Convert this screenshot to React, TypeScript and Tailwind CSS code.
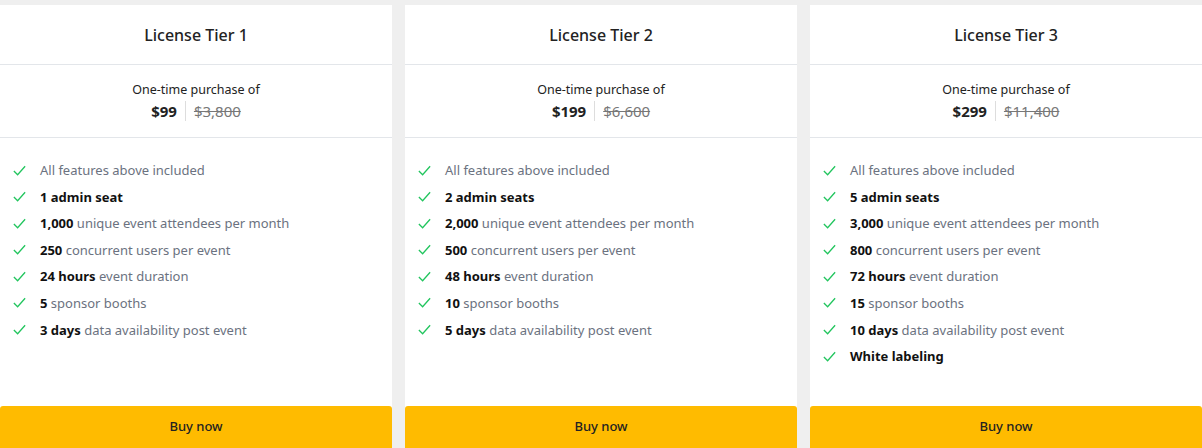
import React from 'react';

type Feature = { b?: string; t?: string };
type Tier = { name: string; price: string; old: string; features: Feature[] };

const tiers: Tier[] = [
  {
    name: 'License Tier 1', price: '$99', old: '$3,800',
    features: [
      { t: 'All features above included' },
      { b: '1 admin seat' },
      { b: '1,000', t: 'unique event attendees per month' },
      { b: '250', t: 'concurrent users per event' },
      { b: '24 hours', t: 'event duration' },
      { b: '5', t: 'sponsor booths' },
      { b: '3 days', t: 'data availability post event' },
    ],
  },
  {
    name: 'License Tier 2', price: '$199', old: '$6,600',
    features: [
      { t: 'All features above included' },
      { b: '2 admin seats' },
      { b: '2,000', t: 'unique event attendees per month' },
      { b: '500', t: 'concurrent users per event' },
      { b: '48 hours', t: 'event duration' },
      { b: '10', t: 'sponsor booths' },
      { b: '5 days', t: 'data availability post event' },
    ],
  },
  {
    name: 'License Tier 3', price: '$299', old: '$11,400',
    features: [
      { t: 'All features above included' },
      { b: '5 admin seats' },
      { b: '3,000', t: 'unique event attendees per month' },
      { b: '800', t: 'concurrent users per event' },
      { b: '72 hours', t: 'event duration' },
      { b: '15', t: 'sponsor booths' },
      { b: '10 days', t: 'data availability post event' },
      { b: 'White labeling' },
    ],
  },
];

const Check = () => (
  <svg viewBox="0 0 16 16" className="w-[15px] h-[15px] shrink-0" fill="none" stroke="#22c55e" strokeWidth="1.4">
    <path d="M2 8.5l4 4 8-9" />
  </svg>
);

export default function App() {
  return (
    <div className="w-[1202px] h-[448px] bg-[#efefef] flex gap-[13px] pt-[5px] font-['Roboto',sans-serif] overflow-hidden">
      {tiers.map((tier) => (
        <div key={tier.name} className="flex-1 bg-white flex flex-col">
          <div className="h-[60px] border-b border-[#e3e6ea] flex items-center justify-center text-[16px] font-medium text-[#222]">
            {tier.name}
          </div>
          <div className="h-[73px] border-b border-[#e3e6ea] flex flex-col items-center justify-center text-[#222]">
            <div className="text-[12.5px] leading-4">One-time purchase of</div>
            <div className="flex items-center mt-[3px] text-[15px] leading-5">
              <span className="font-bold pr-2">{tier.price}</span>
              <span className="border-l border-[#ddd] pl-2 text-[#777] line-through">{tier.old}</span>
            </div>
          </div>
          <div className="flex-1 flex flex-col gap-[8.6px] pt-[23px] px-[12px]">
            {tier.features.map((f, i) => (
              <div key={i} className="flex items-center gap-[13px] text-[13px] leading-[18px]">
                <Check />
                <span>
                  {f.b && <span className="font-bold text-[#111]">{f.b}</span>}
                  {f.b && f.t && ' '}
                  {f.t && <span className="text-[#6b7280]">{f.t}</span>}
                </span>
              </div>
            ))}
          </div>
          <button className="h-[42px] bg-[#ffbb00] rounded-t-[3px] text-[13px] font-medium text-[#222]">Buy now</button>
        </div>
      ))}
    </div>
  );
}
